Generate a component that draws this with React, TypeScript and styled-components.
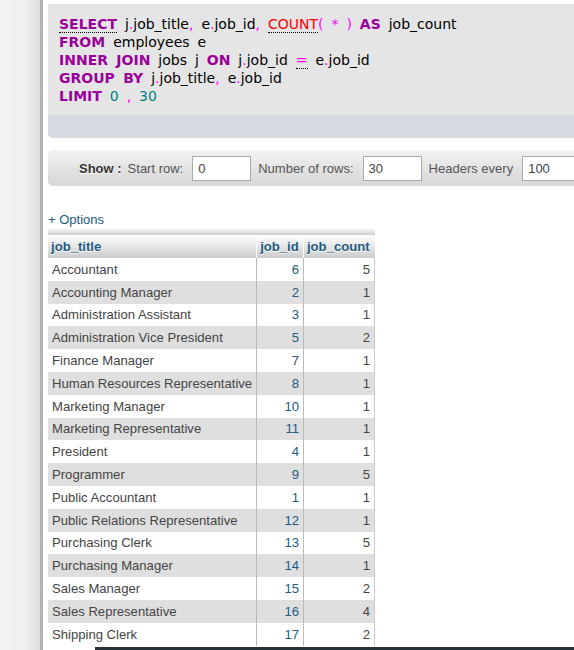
import React from "react";
import styled, { createGlobalStyle } from "styled-components";

const Global = createGlobalStyle`
  html, body { margin: 0; padding: 0; background: #fff; overflow: hidden; }
  body { font-family: "Liberation Sans", Arial, sans-serif; }
`;

const Page = styled.div`
  display: flex;
  height: 650px;
  width: 574px;
  overflow: hidden;
`;

const Sidebar = styled.div`
  flex: none;
  width: 40px;
  background: linear-gradient(to right, #f3f3f3 0%, #efefef 60%, #dedede 100%);
`;

const Divider = styled.div`
  flex: none;
  width: 3px;
  background: #b2b2b2;
`;

const Main = styled.div`
  flex: none;
  width: 720px;
  padding: 4px 0 0 5px;
  display: flex;
  flex-direction: column;
`;

const SqlBox = styled.div`
  background: #e5e5e5;
  border-bottom-left-radius: 5px;
  overflow: hidden;
`;

const Code = styled.div`
  padding: 11px 11px 10px;
  height: 90px;
  font-family: "DejaVu Sans", Verdana, sans-serif;
  font-size: 14px;
  line-height: 18px;
  word-spacing: 3.5px;
  color: #000;
`;

const Line = styled.div`
  white-space: pre;
`;

const Kw = styled.span<{ $abbr?: boolean }>`
  color: #990099;
  font-weight: bold;
  ${(p) => (p.$abbr ? "border-bottom: 1px dotted #000;" : "")}
`;

const Pn = styled.span`
  color: #ff00ff;
`;

const Fn = styled.span`
  color: #ff0000;
  border-bottom: 1px dotted #000;
`;

const Op = styled.span`
  color: #ff00ff;
  border-bottom: 1px dotted #000;
`;

const Num = styled.span`
  color: #008080;
`;

const SqlFooter = styled.div`
  height: 23px;
  background: #d5dbe1;
`;

const ShowBar = styled.div`
  margin-top: 12px;
  height: 36px;
  border-radius: 5px;
  background: linear-gradient(#f2f2f2, #d6d6d6);
  display: flex;
  align-items: center;
  padding-left: 31px;
  font-size: 13px;
  color: #555;
  white-space: nowrap;
`;

const ShowLabel = styled.span`
  font-weight: bold;
  color: #333;
  text-shadow: 0 1px 0 #fff;
  margin-right: 6px;
`;

const FieldLabel = styled.span`
  margin-right: 9px;
`;

const Input = styled.input`
  box-sizing: border-box;
  width: 59px;
  height: 25px;
  border: 1px solid #aaa;
  background: #fff;
  font-family: "Liberation Sans", Arial, sans-serif;
  font-size: 13px;
  color: #444;
  padding: 0 5px;
  margin: 0 7px 0 0;
  outline: none;
`;

const Options = styled.div`
  margin-top: 26px;
  font-size: 13px;
  line-height: 16px;
  color: #235a81;
`;

const Table = styled.table`
  margin-top: 0;
  border-collapse: collapse;
  font-size: 13.1px;
  color: #444;
  width: 327px;
`;

const Cap = styled.tr`
  height: 7px;
  background: linear-gradient(#ffffff, #cccccc);
`;

const Th = styled.th<{ $w?: number }>`
  height: 23px;
  padding: 0 3px;
  text-align: left;
  font-weight: bold;
  color: #235a81;
  text-shadow: 0 1px 0 #fff;
  background: linear-gradient(#ffffff, #cccccc);
  border-left: 1px solid #fff;
  ${(p) => (p.$w ? `width: ${p.$w}px;` : "")}
  &:first-child { border-left: none; }
`;

const Tr = styled.tr<{ $odd: boolean }>`
  height: 22.8px;
  background: ${(p) => (p.$odd ? "#dfdfdf" : "#ffffff")};
`;

const Td = styled.td<{ $num?: boolean; $blue?: boolean; $last?: boolean }>`
  height: 22.8px;
  padding: 0 4px;
  box-sizing: border-box;
  text-align: ${(p) => (p.$num ? "right" : "left")};
  color: ${(p) => (p.$blue ? "#235a81" : "#444")};
  border-left: ${(p) => (p.$num ? "1px solid #bbb" : "none")};
  border-right: ${(p) => (p.$last ? "1px solid #ccc" : "none")};
  white-space: nowrap;
`;

const Taskbar = styled.div`
  position: fixed;
  left: 95px;
  right: 0;
  bottom: 0;
  height: 3px;
  background: #263238;
`;

const rows: [string, number, number][] = [
  ["Accountant", 6, 5],
  ["Accounting Manager", 2, 1],
  ["Administration Assistant", 3, 1],
  ["Administration Vice President", 5, 2],
  ["Finance Manager", 7, 1],
  ["Human Resources Representative", 8, 1],
  ["Marketing Manager", 10, 1],
  ["Marketing Representative", 11, 1],
  ["President", 4, 1],
  ["Programmer", 9, 5],
  ["Public Accountant", 1, 1],
  ["Public Relations Representative", 12, 1],
  ["Purchasing Clerk", 13, 5],
  ["Purchasing Manager", 14, 1],
  ["Sales Manager", 15, 2],
  ["Sales Representative", 16, 4],
  ["Shipping Clerk", 17, 2],
];

export default function App() {
  return (
    <>
      <Global />
      <Page>
        <Sidebar />
        <Divider />
        <Main>
          <SqlBox>
            <Code>
              <Line>
                <Kw $abbr>SELECT</Kw> j<Pn>.</Pn>job_title<Pn>,</Pn> e<Pn>.</Pn>job_id<Pn>,</Pn>{" "}
                <Fn>COUNT</Fn>
                <Pn>( * )</Pn> <Kw>AS</Kw> job_count
              </Line>
              <Line>
                <Kw>FROM</Kw> employees e
              </Line>
              <Line>
                <Kw>INNER JOIN</Kw> jobs j <Kw>ON</Kw> j<Pn>.</Pn>job_id <Op>=</Op> e<Pn>.</Pn>job_id
              </Line>
              <Line>
                <Kw>GROUP BY</Kw> j<Pn>.</Pn>job_title<Pn>,</Pn> e<Pn>.</Pn>job_id
              </Line>
              <Line>
                <Kw>LIMIT</Kw> <Num>0</Num> <Pn>,</Pn> <Num>30</Num>
              </Line>
            </Code>
            <SqlFooter />
          </SqlBox>
          <ShowBar>
            <ShowLabel>Show :</ShowLabel>
            <FieldLabel>Start row:</FieldLabel>
            <Input defaultValue="0" />
            <FieldLabel>Number of rows:</FieldLabel>
            <Input defaultValue="30" />
            <FieldLabel>Headers every</FieldLabel>
            <Input defaultValue="100" />
          </ShowBar>
          <Options>+ Options</Options>
          <Table>
            <thead>
              <Cap>
                <td colSpan={3} />
              </Cap>
              <tr>
                <Th $w={202}>job_title</Th>
                <Th>job_id</Th>
                <Th>job_count</Th>
              </tr>
            </thead>
            <tbody>
              {rows.map(([t, id, c], i) => (
                <Tr key={t} $odd={i % 2 === 1}>
                  <Td>{t}</Td>
                  <Td $num $blue>
                    {id}
                  </Td>
                  <Td $num $last>
                    {c}
                  </Td>
                </Tr>
              ))}
            </tbody>
          </Table>
        </Main>
      </Page>
      <Taskbar />
    </>
  );
}
